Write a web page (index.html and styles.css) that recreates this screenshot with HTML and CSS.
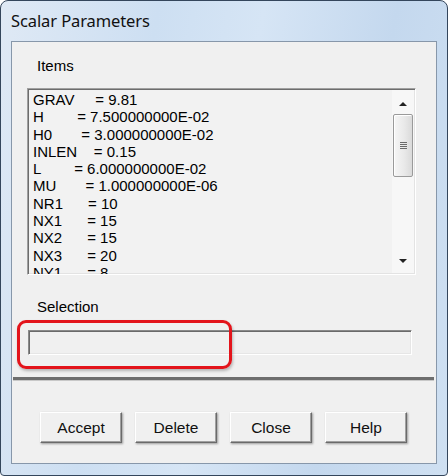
FILE: index.html
```html
<!DOCTYPE html>
<html>
<head>
<meta charset="utf-8">
<link rel="stylesheet" href="styles.css">
</head>
<body>
<div class="window">
  <div class="titlebar"><span class="title">Scalar Parameters</span></div>
  <div class="client">
    <div class="label">Items</div>
    <div class="listbox">
      <div class="lines">
<div class="line">GRAV     = 9.81</div>
<div class="line">H        = 7.500000000E-02</div>
<div class="line">H0       = 3.000000000E-02</div>
<div class="line">INLEN    = 0.15</div>
<div class="line">L        = 6.000000000E-02</div>
<div class="line">MU       = 1.000000000E-06</div>
<div class="line">NR1      = 10</div>
<div class="line">NX1      = 15</div>
<div class="line">NX2      = 15</div>
<div class="line">NX3      = 20</div>
<div class="line">NY1      = 8</div>
<div class="line">NY2      = 8</div>
      </div>
      <div class="scrollbar">
        <div class="sb-btn"><span class="arrow-up"></span></div>
        <div class="thumb"><span class="grip"></span></div>
        <div class="track"></div>
        <div class="sb-btn"><span class="arrow-down"></span></div>
      </div>
    </div>
    <div class="label sel-label">Selection</div>
    <div class="input"></div>
    <div class="separator"></div>
    <div class="buttons">
      <div class="btn">Accept</div>
      <div class="btn">Delete</div>
      <div class="btn">Close</div>
      <div class="btn">Help</div>
    </div>
    <div class="highlight"></div>
  </div>
</div>
</body>
</html>
```
FILE: styles.css
```css
html, body {
  margin: 0;
  padding: 0;
  background: #ffffff;
}
.window {
  box-sizing: border-box;
  width: 448px;
  height: 476px;
  border: 1px solid #34465c;
  border-radius: 8px 8px 4px 4px;
  background: linear-gradient(100deg, #dfe9f5 0%, #cddff2 30%, #d6e5f5 50%, #c4d8ee 75%, #cfe0f2 100%);
  padding: 0 10px 11px 10px;
  display: flex;
  flex-direction: column;
}
.titlebar {
  height: 40px;
  display: flex;
  align-items: center;
  padding-bottom: 1px;
  box-sizing: border-box;
}
.title {
  font-family: "Noto Sans", "Open Sans", sans-serif;
  font-size: 16.5px;
  color: #111;
  letter-spacing: -0.1px;
}
.client {
  position: relative;
  box-sizing: border-box;
  height: 423px;
  border: 1px solid #8797aa;
  background: #f0f0f0;
  display: flex;
  flex-direction: column;
  font-family: "Liberation Sans", Arial, sans-serif;
  font-size: 15px;
  color: #000;
}
.label {
  margin: 15px 0 0 25px;
  height: 18px;
  line-height: 18px;
}
.listbox {
  margin: 13px 0 0 15px;
  width: 389px;
  height: 187px;
  box-sizing: border-box;
  border: 1px solid;
  border-color: #a0a0a0 #ffffff #ffffff #a0a0a0;
  box-shadow: inset 1px 1px 0 #6d6d6d, inset -1px -1px 0 #e3e3e3;
  background: #f2f2f2;
  display: flex;
  overflow: hidden;
}
.lines {
  flex: 1;
  padding: 2px 0 0 5px;
  overflow: hidden;
}
.line {
  white-space: pre;
  line-height: 17.3px;
  height: 17.3px;
}
.scrollbar {
  width: 22px;
  margin: 1px 1px 1px 0;
  background: #f7f7f7;
  display: flex;
  flex-direction: column;
  align-items: center;
}
.sb-btn {
  height: 24px;
  width: 100%;
  display: flex;
  align-items: center;
  justify-content: center;
}
.arrow-up {
  width: 0;
  height: 0;
  border-left: 4px solid transparent;
  border-right: 4px solid transparent;
  border-bottom: 4px solid #222;
  margin-top: 3px;
}
.arrow-down {
  width: 0;
  height: 0;
  border-left: 4px solid transparent;
  border-right: 4px solid transparent;
  border-top: 4px solid #222;
  margin-bottom: 1px;
}
.thumb {
  box-sizing: border-box;
  width: 20px;
  height: 63px;
  border: 1px solid #9a9a9a;
  border-radius: 2px;
  background: linear-gradient(to right, #f6f6f6, #e8e8e8 60%, #dadada);
  box-shadow: inset 1px 1px 0 #ffffff;
  display: flex;
  align-items: center;
  justify-content: center;
}
.grip {
  width: 7px;
  height: 7px;
  background: repeating-linear-gradient(to bottom, #6b6b6b 0 1px, transparent 1px 2px);
}
.track {
  flex: 1;
}
.sel-label {
  margin-top: 23px;
}
.input {
  margin: 14px 0 0 16px;
  width: 384px;
  height: 25px;
  box-sizing: border-box;
  border: 1px solid;
  border-color: #8a8a8a #ffffff #ffffff #8a8a8a;
  box-shadow: inset 1px 1px 0 #6a6a6a, inset -1px -1px 0 #e6e6e6;
  background: #f0f0f0;
}
.separator {
  margin: 22px 2px 0 1px;
  height: 3px;
  background: #6e6e6e;
  border-bottom: 1px solid #c8c8c8;
}
.buttons {
  margin-top: 31px;
  padding-left: 28px;
  display: flex;
  gap: 13px;
}
.btn {
  box-sizing: border-box;
  width: 82px;
  height: 31px;
  border: 1px solid;
  border-color: #ffffff #6a6a6a #6a6a6a #ffffff;
  box-shadow: inset -1px -1px 0 #a0a0a0, 1px 1px 2px rgba(0, 0, 0, 0.35);
  background: #f0f0f0;
  display: flex;
  align-items: center;
  justify-content: center;
  color: #111;
  font-size: 15.5px;
}
.highlight {
  position: absolute;
  left: 5px;
  top: 278px;
  width: 215px;
  height: 49px;
  box-sizing: border-box;
  border: 3px solid #e3141b;
  border-radius: 9px;
  box-shadow: 1px 2px 3px rgba(0, 0, 0, 0.25);
}
```
